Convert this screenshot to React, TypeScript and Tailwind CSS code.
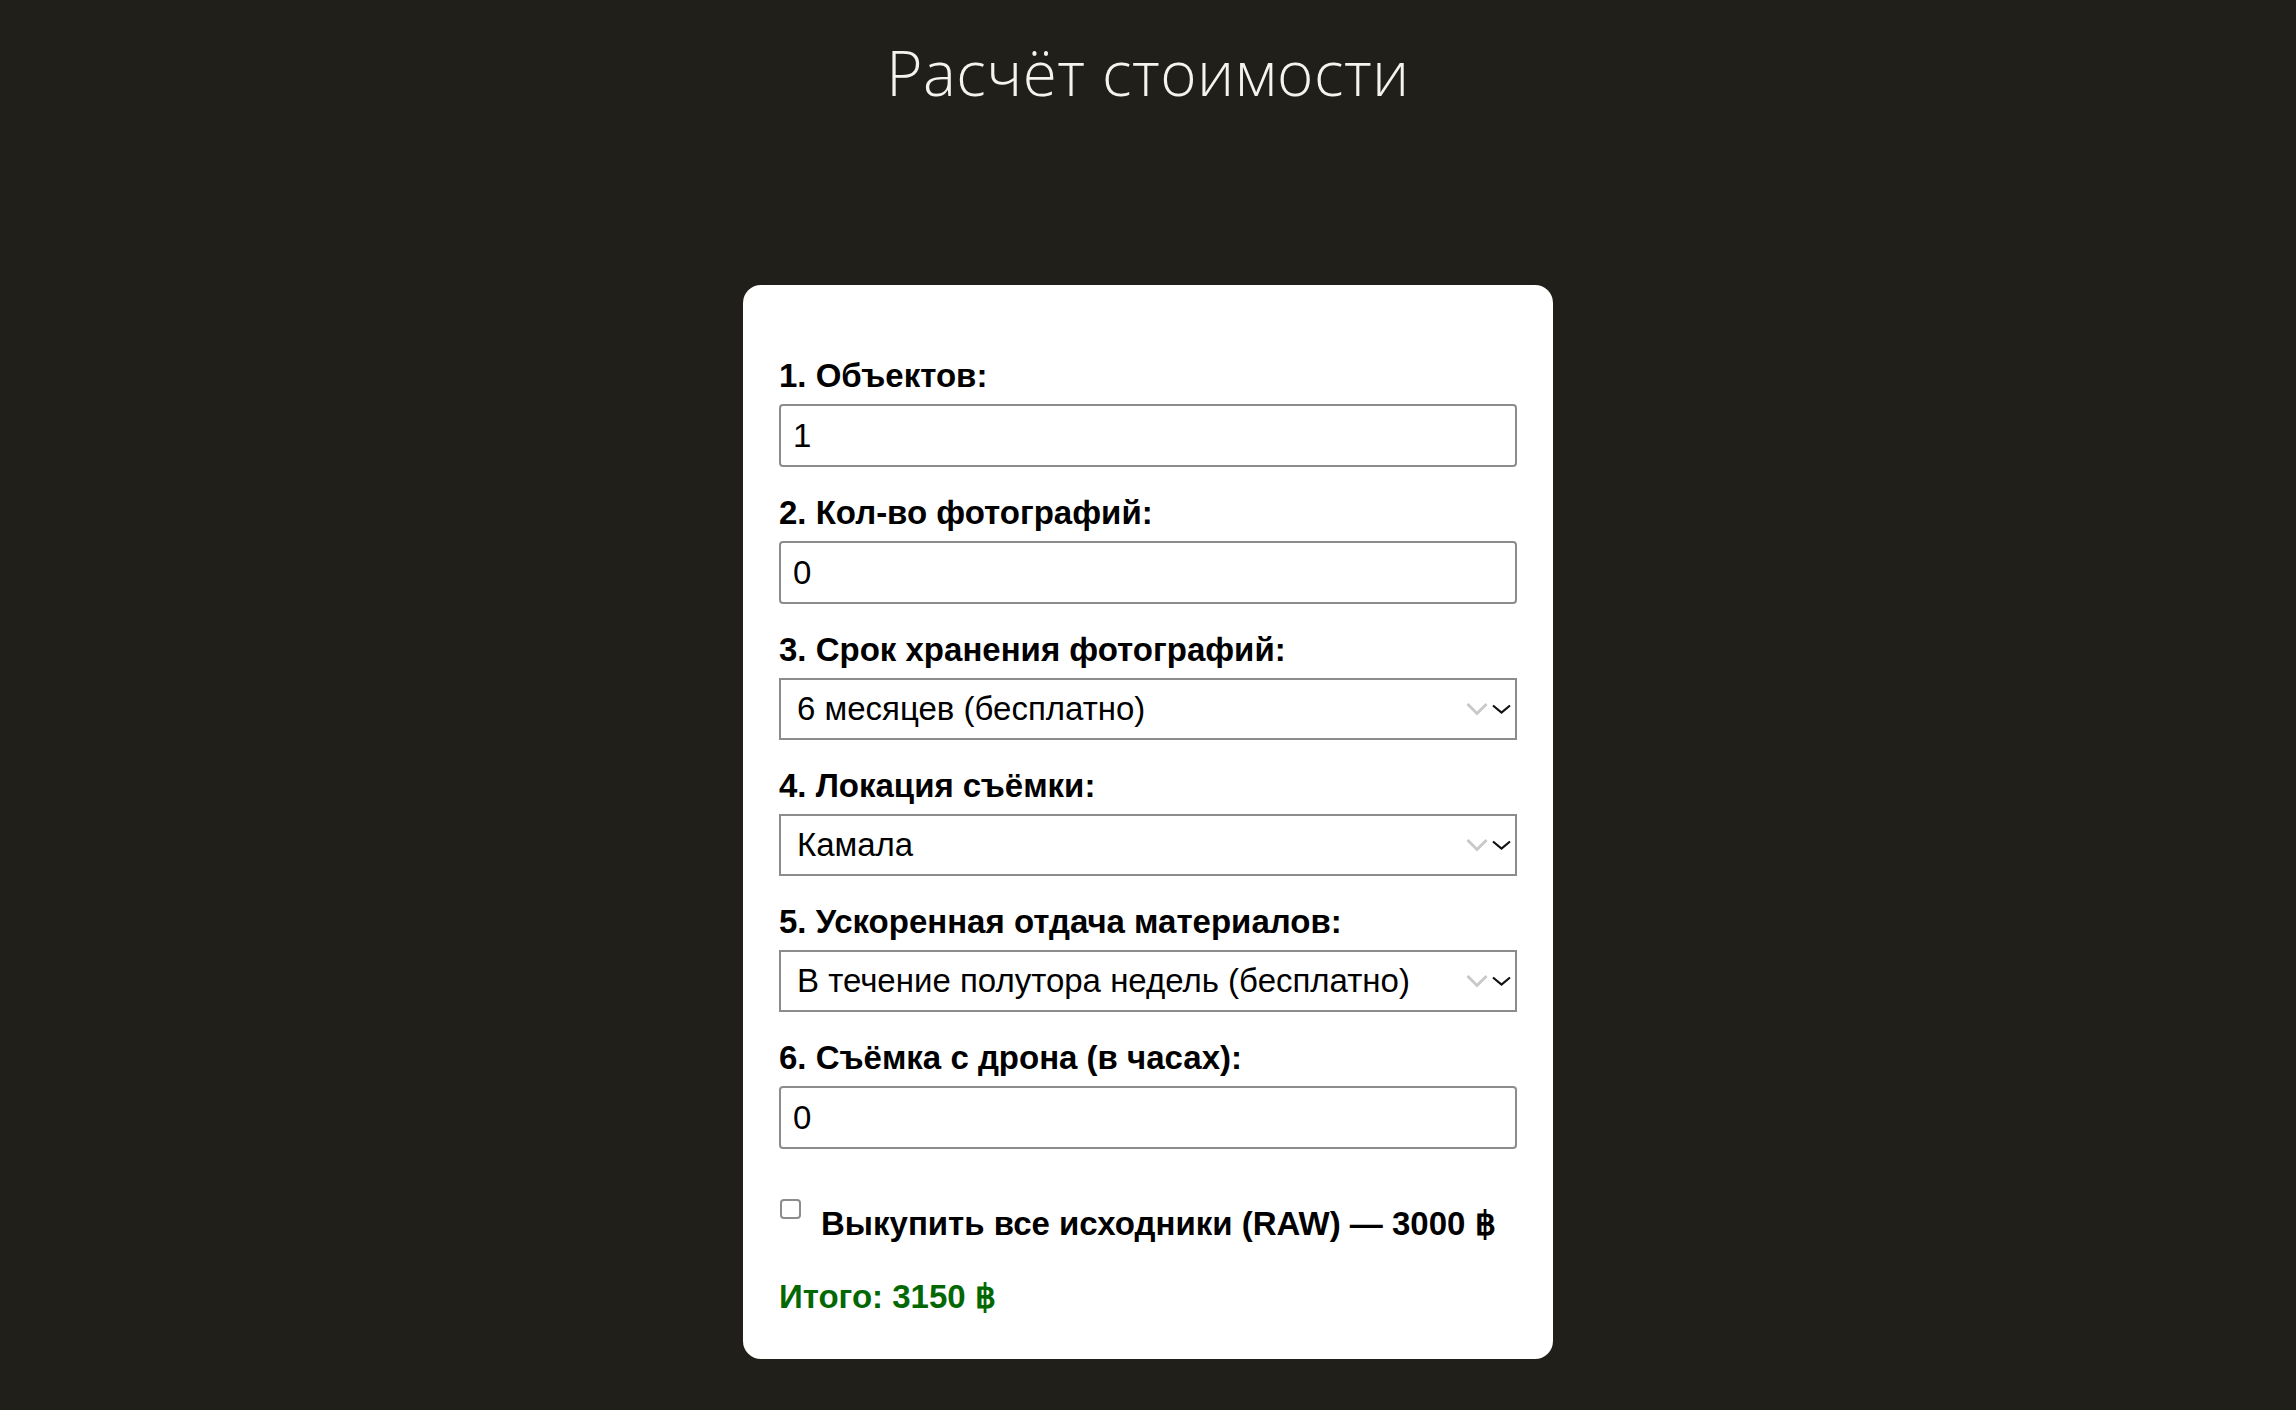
import { useState } from "react";

const STORAGE = ["6 месяцев (бесплатно)", "1 год", "2 года"];
const LOCATIONS = ["Камала", "Патонг", "Карон", "Ката"];
const SPEED = ["В течение полутора недель (бесплатно)", "В течение 3 дней", "В течение 24 часов"];

function Chevrons() {
  return (
    <div className="pointer-events-none absolute right-[6px] top-1/2 flex -translate-y-1/2 items-center gap-[4px]">
      <svg width="22" height="14" viewBox="0 0 22 14" fill="none">
        <path d="M1.5 2 L11 11.5 L20.5 2" stroke="#c9c9c9" strokeWidth="3" />
      </svg>
      <svg width="19" height="10" viewBox="0 0 19 10" fill="none">
        <path d="M1 1.5 L9.5 8.5 L18 1.5" stroke="#111111" strokeWidth="2.2" />
      </svg>
    </div>
  );
}

function Field({ label, children }: { label: string; children: React.ReactNode }) {
  return (
    <div className="mb-[28px] flex flex-col">
      <label className="mb-[10px] text-[33px] font-bold leading-[36px] text-black">{label}</label>
      {children}
    </div>
  );
}

function NumberInput({ value, onChange }: { value: number; onChange: (v: number) => void }) {
  return (
    <input
      type="number"
      value={value}
      onChange={(e) => onChange(Number(e.target.value))}
      className="h-[63px] w-full appearance-none rounded-[4px] border-2 border-[#8c8c8c] bg-white px-[12px] text-[33px] text-black outline-none [-moz-appearance:textfield] [&::-webkit-inner-spin-button]:appearance-none"
    />
  );
}

function Select({ options, value, onChange }: { options: string[]; value: string; onChange: (v: string) => void }) {
  return (
    <div className="relative">
      <select
        value={value}
        onChange={(e) => onChange(e.target.value)}
        className="h-[62px] w-full appearance-none rounded-none border-2 border-[#8c8c8c] bg-white pl-[16px] pr-[70px] text-[33px] text-black outline-none"
      >
        {options.map((o) => (
          <option key={o}>{o}</option>
        ))}
      </select>
      <Chevrons />
    </div>
  );
}

export default function App() {
  const [objects, setObjects] = useState(1);
  const [photos, setPhotos] = useState(0);
  const [storage, setStorage] = useState(STORAGE[0]);
  const [location, setLocation] = useState(LOCATIONS[0]);
  const [speed, setSpeed] = useState(SPEED[0]);
  const [drone, setDrone] = useState(0);
  const [raw, setRaw] = useState(false);

  const total = 3150 + (raw ? 3000 : 0);

  return (
    <div className="flex min-h-screen w-full flex-col items-center bg-[#201f1a] font-['Liberation_Sans',Arial,sans-serif]">
      <h1 className="mt-[30px] font-['Open_Sans','Noto_Sans',sans-serif] text-[62px] font-light leading-[84px] tracking-[0.5px] text-[#f3f3f0]">
        Расчёт стоимости
      </h1>

      <div className="mt-[171px] mb-[51px] w-[810px] rounded-[18px] bg-white px-[36px] pt-[73px] pb-[44px]">
        <Field label="1. Объектов:">
          <NumberInput value={objects} onChange={setObjects} />
        </Field>
        <Field label="2. Кол-во фотографий:">
          <NumberInput value={photos} onChange={setPhotos} />
        </Field>
        <Field label="3. Срок хранения фотографий:">
          <Select options={STORAGE} value={storage} onChange={setStorage} />
        </Field>
        <Field label="4. Локация съёмки:">
          <Select options={LOCATIONS} value={location} onChange={setLocation} />
        </Field>
        <Field label="5. Ускоренная отдача материалов:">
          <Select options={SPEED} value={speed} onChange={setSpeed} />
        </Field>
        <Field label="6. Съёмка с дрона (в часах):">
          <NumberInput value={drone} onChange={setDrone} />
        </Field>

        <label className="mt-[50px] flex cursor-pointer items-start gap-[20px]">
          <input
            type="checkbox"
            checked={raw}
            onChange={(e) => setRaw(e.target.checked)}
            className="peer sr-only"
          />
          <span className="ml-[1px] h-[20px] w-[21px] shrink-0 rounded-[4px] border-2 border-[#8c8c8c] bg-white" />
          <span className="pt-[7px] text-[33px] font-bold leading-[36px] text-black">
            Выкупить все исходники (RAW) — 3000 ฿
          </span>
        </label>

        <p className="mt-[37px] text-[33px] font-bold leading-[36px] text-[#036803]">Итого: {total} ฿</p>
      </div>
    </div>
  );
}
